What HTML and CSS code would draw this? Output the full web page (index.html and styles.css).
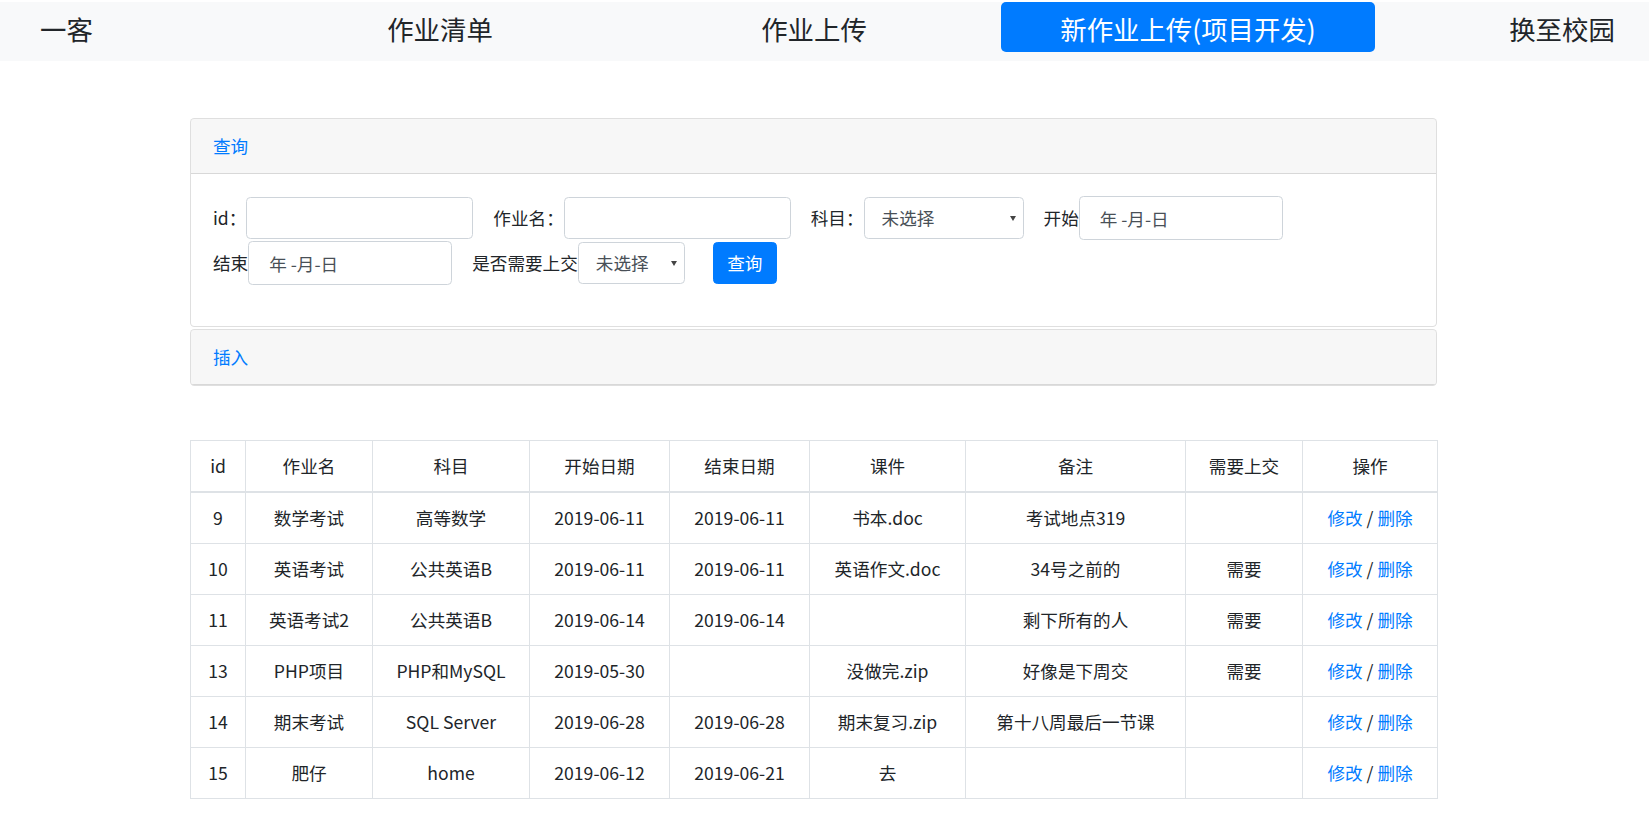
FILE: index.html
```html
<!DOCTYPE html>
<html lang="zh-CN">
<head>
<meta charset="utf-8">
<title>新作业上传(项目开发)</title>
<link rel="stylesheet" href="styles.css">
</head>
<body>
<nav class="navbar">
  <a class="brand" href="#">一客</a>
  <ul class="nav">
    <li><a class="nav-link" href="#">作业清单</a></li>
    <li><a class="nav-link" href="#">作业上传</a></li>
    <li><a class="nav-link active" href="#">新作业上传(项目开发)</a></li>
    <li><a class="nav-link" href="#">换至校园</a></li>
  </ul>
</nav>
<main class="container">
  <div class="accordion">
    <div class="card">
      <div class="card-header"><button class="btn-link" type="button">查询</button></div>
      <div class="card-body">
        <form class="form-inline">
          <div class="group"><label>id：</label><input class="form-control text" type="text"></div>
          <div class="group"><label>作业名：</label><input class="form-control text" type="text"></div>
          <div class="group"><label>科目：</label><span class="select-wrap"><select class="form-control select"><option>未选择</option></select><span class="caret"></span></span></div>
          <div class="group"><label>开始</label><input class="form-control date" type="text" value="年 -月-日"></div>
          <div class="group"><label>结束</label><input class="form-control date" type="text" value="年 -月-日"></div>
          <div class="group"><label>是否需要上交</label><span class="select-wrap"><select class="form-control select short"><option>未选择</option></select><span class="caret"></span></span></div>
          <button class="btn-primary" type="button">查询</button>
        </form>
      </div>
    </div>
    <div class="card">
      <div class="card-header"><button class="btn-link" type="button">插入</button></div>
    </div>
  </div>

  <table class="table">
    <colgroup>
      <col class="c1"><col class="c2"><col class="c3"><col class="c4"><col class="c5"><col class="c6"><col class="c7"><col class="c8"><col class="c9">
    </colgroup>
    <thead>
      <tr><th>id</th><th>作业名</th><th>科目</th><th>开始日期</th><th>结束日期</th><th>课件</th><th>备注</th><th>需要上交</th><th>操作</th></tr>
    </thead>
    <tbody>
      <tr><td>9</td><td>数学考试</td><td>高等数学</td><td>2019-06-11</td><td>2019-06-11</td><td>书本.doc</td><td>考试地点319</td><td></td><td><a href="#">修改</a> / <a href="#">删除</a></td></tr>
      <tr><td>10</td><td>英语考试</td><td>公共英语B</td><td>2019-06-11</td><td>2019-06-11</td><td>英语作文.doc</td><td>34号之前的</td><td>需要</td><td><a href="#">修改</a> / <a href="#">删除</a></td></tr>
      <tr><td>11</td><td>英语考试2</td><td>公共英语B</td><td>2019-06-14</td><td>2019-06-14</td><td></td><td>剩下所有的人</td><td>需要</td><td><a href="#">修改</a> / <a href="#">删除</a></td></tr>
      <tr><td>13</td><td>PHP项目</td><td>PHP和MySQL</td><td>2019-05-30</td><td></td><td>没做完.zip</td><td>好像是下周交</td><td>需要</td><td><a href="#">修改</a> / <a href="#">删除</a></td></tr>
      <tr><td>14</td><td>期末考试</td><td>SQL Server</td><td>2019-06-28</td><td>2019-06-28</td><td>期末复习.zip</td><td>第十八周最后一节课</td><td></td><td><a href="#">修改</a> / <a href="#">删除</a></td></tr>
      <tr><td>15</td><td>肥仔</td><td>home</td><td>2019-06-12</td><td>2019-06-21</td><td>去</td><td></td><td></td><td><a href="#">修改</a> / <a href="#">删除</a></td></tr>
    </tbody>
  </table>
</main>
</body>
</html>
```

FILE: styles.css
```css
html, body {
  margin: 0;
  padding: 0;
  overflow-x: hidden;
}

body {
  font-family: "Noto Sans CJK SC", "Noto Sans", sans-serif;
  font-size: 17.6px;
  line-height: 1.5;
  color: #212529;
  background: #fff;
}

/* ---------- navbar ---------- */
.navbar {
  display: flex;
  align-items: flex-start;
  margin-top: 2px;
  height: 59px;
  background: #f8f9fa;
  overflow: hidden;
}

.brand {
  flex: 0 0 253px;
  box-sizing: border-box;
  height: 50px;
  padding: 5px 0 0 40px;
  line-height: 44px;
  font-size: 26.4px;
  color: #212529;
  text-decoration: none;
}

.nav {
  display: flex;
  flex-shrink: 0;
  list-style: none;
  margin: 0;
  padding: 0;
}

.nav li {
  flex: 0 0 374px;
}

.nav-link {
  display: block;
  box-sizing: border-box;
  height: 50px;
  padding-top: 5px;
  line-height: 44px;
  font-size: 26.4px;
  text-align: center;
  color: #212529;
  text-decoration: none;
  border-radius: 5px;
}

.nav-link.active {
  background: #007bff;
  color: #fff;
}

/* ---------- layout ---------- */
.container {
  margin: 57px 212px 0 190px;
}

/* ---------- cards ---------- */
.card {
  border: 1px solid rgba(0, 0, 0, 0.125);
  border-radius: 4.4px;
  background: #fff;
  overflow: hidden;
}

.card + .card {
  margin-top: 2px;
}

.card-header {
  display: flex;
  align-items: center;
  height: 54px;
  padding: 0 22px;
  background: rgba(0, 0, 0, 0.03);
  border-bottom: 1px solid rgba(0, 0, 0, 0.125);
}

.btn-link {
  border: 0;
  background: none;
  padding: 0;
  font: inherit;
  color: #007bff;
  cursor: pointer;
}

.card-body {
  padding: 22px 22px 41px;
}

/* ---------- form ---------- */
.form-inline {
  display: flex;
  flex-wrap: wrap;
  align-items: center;
  column-gap: 20px;
  row-gap: 1px;
  margin: 0;
}

.group {
  display: flex;
  align-items: center;
  height: 44px;
}

.group label {
  white-space: nowrap;
}

.form-control {
  box-sizing: border-box;
  height: 42px;
  margin: 0;
  border: 1px solid #ced4da;
  border-radius: 4.4px;
  padding: 0 13px;
  font: inherit;
  color: #495057;
  background: #fff;
  outline: none;
}

.text {
  width: 227px;
}

.date {
  width: 204px;
  height: 44px;
  padding-left: 20px;
}

.select-wrap {
  position: relative;
  display: block;
}

.select {
  display: block;
  width: 160px;
  -webkit-appearance: none;
  appearance: none;
  padding-left: 17px;
}

.select.short {
  width: 107px;
}

.caret {
  position: absolute;
  right: 8px;
  top: 50%;
  margin-top: -2px;
  width: 0;
  height: 0;
  border-left: 3px solid transparent;
  border-right: 3px solid transparent;
  border-top: 5px solid #444;
  pointer-events: none;
}

.btn-primary {
  width: 64px;
  height: 42px;
  margin-left: 8px;
  padding: 0;
  border: 1px solid #007bff;
  border-radius: 4.4px;
  background: #007bff;
  color: #fff;
  font: inherit;
}

/* ---------- table ---------- */
.table {
  width: 100%;
  margin-top: 54px;
  border-collapse: collapse;
  table-layout: fixed;
}

.c1 { width: 55px; }
.c2 { width: 127px; }
.c3 { width: 157px; }
.c4 { width: 140px; }
.c5 { width: 140px; }
.c6 { width: 156px; }
.c7 { width: 220px; }
.c8 { width: 117px; }
.c9 { width: 135px; }

.table th,
.table td {
  border: 1px solid #dee2e6;
  padding: 12px 4px;
  line-height: 26px;
  font-weight: 400;
  text-align: center;
  vertical-align: middle;
  white-space: nowrap;
}

.table thead th {
  border-bottom: 2px solid #dee2e6;
  padding: 12px 4px;
}

.table a {
  color: #007bff;
  text-decoration: none;
}
```
